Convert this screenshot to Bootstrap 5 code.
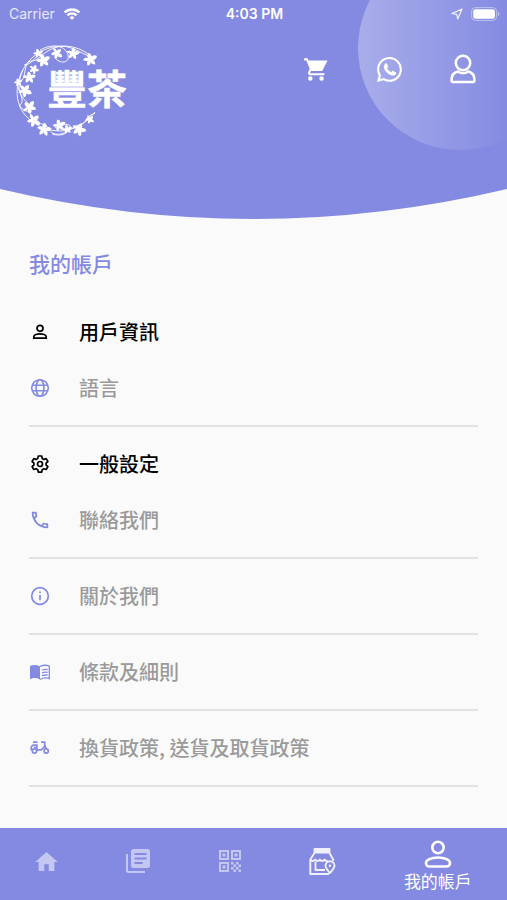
<!DOCTYPE html>
<html lang="zh-Hant">
<head>
<meta charset="utf-8">
<meta name="viewport" content="width=device-width, initial-scale=1">
<title>我的帳戶</title>
<link href="https://cdn.jsdelivr.net/npm/bootstrap@5.3.0/dist/css/bootstrap.min.css" rel="stylesheet">
<style>
:root { --brand: #848ae1; }
body { background: #fafafa; font-family: "Noto Sans CJK TC", sans-serif; }
svg { display: block; flex: none; }
.hero { color: var(--brand); }
.hero-body { background: var(--brand); min-height: 189px; }
.orb { position: absolute; top: -54px; right: -55px; width: 204px; height: 204px; border-radius: 50%; background: linear-gradient(90deg, #a8adea, #848ae1 75%); }
.status { height: 28px; font: 14px/28px Inter, sans-serif; padding: 0 7px 0 9px; color: #e8e9fb; }
.clock { font-weight: 600; color: #fff; }
.status > div { flex: 1 1 0; }
.brand { margin: 12px 0 0 12px; }
.tool { width: 73px; height: 44px; }
.tools { margin-top: 19px; }
.page-title { font-size: 21px; line-height: 32px; font-weight: 500; color: var(--brand); padding-top: 28px; margin-bottom: 16px; }
.content { padding: 0 29px; }
.group-title { font-size: 20px; line-height: 38px; font-weight: 500; color: #000; padding-top: 18px; margin: 0; }
.entry { height: 76px; font-size: 20px; line-height: 30px; font-weight: 500; color: #9a9a9a; border-bottom: 2px solid #e2e2e3; }
.entry svg { color: var(--brand); }
.line { gap: 28px; }
.tabs { background: var(--brand); height: 72px; }
.tab { flex: 2 1 0; color: #c4c7f2; padding-bottom: 6px; }
.tab-store { color: #f0f0fc; }
.tab-current { flex-grow: 3; color: #fff; font-size: 17px; line-height: 26px; }
</style>
<script src="https://cdn.jsdelivr.net/npm/bootstrap@5.3.0/dist/js/bootstrap.bundle.min.js"></script>
</head>
<body class="min-vh-100 d-flex flex-column">
<header class="hero position-relative overflow-hidden">
  <div class="hero-body">
    <div class="orb"></div>
    <div class="position-relative">
      <div class="status d-flex align-items-center">
        <div class="d-flex align-items-center gap-2"><span>Carrier</span>
          <svg width="18" height="14" viewBox="0 0 20 16" fill="none" stroke="#fff" stroke-width="2.8"><path d="M1.500 6.200a12.200 12.200 0 0 1 17 0M4.800 9.500a7.500 7.500 0 0 1 10.400 0"/><path d="M10 14.800l-2.700-2.800a3.800 3.800 0 0 1 5.400 0z" fill="#fff" stroke="none"/></svg>
        </div>
        <span class="clock">4:03 PM</span>
        <div class="d-flex align-items-center justify-content-end gap-2">
          <svg width="12" height="12" viewBox="0 0 12 12" fill="none" stroke="#f3f3fd" stroke-width="1.200" stroke-linejoin="round"><path d="M11 1 1 5.500l4.800.8L6.700 11z"/></svg>
          <svg width="29" height="14" viewBox="0 0 29 14"><rect x=".6" y=".6" width="25" height="12.800" rx="3.800" fill="none" stroke="#bfc3f0"/><rect x="2.300" y="2.300" width="21.600" height="9.400" rx="2.200" fill="#fff"/><path d="M27 4.800a2.400 2.400 0 0 1 0 4.400z" fill="#bfc3f0"/></svg>
        </div>
      </div>
      <div class="d-flex justify-content-between align-items-start">
        <a class="brand" href="#" aria-label="豐茶">
          <svg width="120" height="100" viewBox="12 40 120 100" fill="#fff">
            <defs><path id="leaf" d="M-1.500-6C.5-5.500 1.800-4 1.500-2 3-4 5-4 7-3 6.500 0 4.500 1.200 3 1 5 2 5.500 3.500 5 5.500 3 5.500 1 4.500.8 3 .5 5-.5 6.500-2.500 6.500-3.500 4-3 2.500-2 1.500-4 2.500-5.500 2-7 .5-5.500-1.200-3.500-1.500-2-1-3.200-2.500-2.800-4.500-1.500-6z"/></defs>
            <g fill="none" stroke="#fff" stroke-width=".9">
              <path d="M94 59C78 42 50 42 33 57S11 100 26 116s46 25 69-4"/>
              <path d="M89 56C74 50 67 43 54 48S39 61 31 61 27 79 20 82s6 17 1 22 10 6 12 14 12 3 16 11 14 6 22 0 12-3 15-9 7-5 9-7"/>
              <path d="M40 50C55 42 66 47 68 55s-7 9-12 4M23 70C16 85 19 96 27 102M52 134c10 3 16-1 18-6s-10-5-15 0M24 65c8 0 10-8 17-12"/>
            </g>
            <use href="#leaf" transform="translate(38 53) scale(.7)"/><use href="#leaf" x="43" y="60"/><use href="#leaf" transform="translate(57 53) rotate(60) scale(.85)"/>
            <use href="#leaf" transform="translate(73 53) rotate(20) scale(.9)"/><use href="#leaf" x="90" y="59"/>
            <use href="#leaf" transform="translate(34 69) rotate(40) scale(.7)"/><use href="#leaf" transform="translate(29 77) rotate(10) scale(.9)"/>
            <use href="#leaf" transform="translate(18 82) scale(.6)"/><use href="#leaf" transform="translate(25 90) rotate(50)"/>
            <use href="#leaf" transform="translate(29 107) rotate(-30)"/><use href="#leaf" transform="translate(34 120) rotate(60)"/>
            <use href="#leaf" transform="translate(44 129) rotate(20)"/><use href="#leaf" transform="translate(59 125) scale(.9)"/>
            <use href="#leaf" transform="translate(67 129) scale(.7)"/><use href="#leaf" transform="translate(79 129) rotate(35)"/>
            <use href="#leaf" transform="translate(90 119) rotate(60) scale(.65)"/>
            <text x="47" y="104" font-size="40" font-weight="700" font-family="'Noto Sans CJK TC', sans-serif" stroke="#fff" stroke-width=".5" stroke-linejoin="round">豐茶</text>
          </svg>
        </a>
        <nav class="tools d-flex pe-2" aria-label="捷徑">
          <a class="tool d-flex align-items-center justify-content-center text-white" href="#" aria-label="購物車">
            <svg width="27" height="27" viewBox="0 0 24 24" fill="currentColor"><path d="M6.500 18a2 2 0 1 0 0 4 2 2 0 0 0 0-4zM1 2v2h2l3 7.600-1.350 2.440A2 2 0 0 0 6 17h13v-1.600H6.420a.250.250 0 0 1-.220-.370l.9-1.630h9.950l4.750-9.400H4.900L4.100 2zM16.500 18a2 2 0 1 0 0 4 2 2 0 0 0 0-4z"/></svg>
          </a>
          <a class="tool d-flex align-items-center justify-content-center text-white" href="#" aria-label="WhatsApp">
            <svg width="25" height="25" viewBox="0 0 16 16" fill="currentColor"><path d="M13.601 2.326A7.854 7.854 0 0 0 7.994 0C3.627 0 .068 3.558.064 7.926c0 1.399.366 2.760 1.057 3.965L0 16l4.204-1.102a7.933 7.933 0 0 0 3.790.965h.004c4.368 0 7.926-3.558 7.930-7.930A7.898 7.898 0 0 0 13.600 2.326zM7.994 14.521a6.573 6.573 0 0 1-3.356-.920l-.240-.144-2.494.654.666-2.433-.156-.251a6.560 6.560 0 0 1-1.007-3.505c0-3.626 2.957-6.584 6.591-6.584a6.560 6.560 0 0 1 4.660 1.931 6.557 6.557 0 0 1 1.928 4.660c-.004 3.639-2.961 6.592-6.592 6.592z"/><path d="M5.400 4.100c.4-.3.8-.2 1 .2l.7 1.600c.1.400-.1.700-.7 1.300.8 1.300 1.500 1.900 2.800 2.500.6-.7.8-1 1.200-.8l1.600.8c.4.200.4.500.2 1-.3.800-1.200 1.300-2.100 1.200C7.200 11.600 4.400 8.500 4.400 6.100c0-.8.400-1.500 1-2z"/></svg>
          </a>
          <a class="tool d-flex align-items-center justify-content-center text-white" href="#" aria-label="我的帳戶">
            <svg width="26" height="30" viewBox="0 0 26 30" fill="none" stroke="currentColor" stroke-width="2.500"><circle cx="13" cy="9" r="7.200"/><path d="M7.800 17.500C3.500 18.500 1.500 21.500 1.500 26c0 1.400.6 2.100 2 2.100h19c1.400 0 2-.7 2-2.100 0-4.500-2-7.500-6.300-8.500-1.800 1.300-3.400 1.800-5.200 1.800s-3.400-.5-5.200-1.800z"/></svg>
          </a>
        </nav>
      </div>
    </div>
  </div>
  <svg class="w-100 position-relative" height="30" viewBox="0 0 507 30" preserveAspectRatio="none" fill="currentColor"><path d="M0 0Q253.500 60 507 0z"/></svg>
</header>

<main class="content">
  <h1 class="page-title">我的帳戶</h1>
  <h2 class="group-title line d-flex align-items-center">
    <svg width="22" height="22" viewBox="0 0 22 22" fill="none" stroke="currentColor" stroke-width="1.700"><circle cx="11" cy="7.300" r="3"/><path d="M4.800 17.200v-1.400c0-2 3.500-3 6.200-3s6.200 1 6.200 3v1.400z"/></svg>
    <span>用戶資訊</span>
  </h2>
  <a class="entry line d-flex align-items-center text-decoration-none" href="#">
    <svg width="22" height="22" viewBox="0 0 22 22" fill="none" stroke="currentColor" stroke-width="1.600"><circle cx="11" cy="11" r="8.300"/><ellipse cx="11" cy="11" rx="3.900" ry="8.300"/><path d="M3.400 8.200h15.200M3.400 13.800h15.200"/></svg>
    <span>語言</span>
  </a>
  <h2 class="group-title line d-flex align-items-center">
    <svg width="22" height="22" viewBox="0 0 22 22" fill="none" stroke="currentColor" stroke-width="1.700" stroke-linejoin="round"><path d="M9.300 3h3.400l.5 2.400 1.700 1 2.300-.8 1.700 2.900-1.800 1.600v1.900l1.800 1.600-1.700 2.900-2.300-.8-1.700 1-.5 2.400H9.300l-.5-2.400-1.700-1-2.300.8-1.700-2.900L4.900 12v-1.900L3.100 8.500l1.700-2.900 2.300.8 1.700-1z"/><circle cx="11" cy="11" r="2.500"/></svg>
    <span>一般設定</span>
  </h2>
  <a class="entry line d-flex align-items-center text-decoration-none" href="#">
    <svg width="22" height="22" viewBox="0 0 24 24" fill="currentColor"><path d="M6.540 5c.06.890.21 1.760.45 2.590l-1.200 1.200c-.410-1.200-.670-2.470-.760-3.790h1.510m9.860 12.020c.850.240 1.720.390 2.600.450v1.490c-1.320-.090-2.590-.350-3.800-.750l1.200-1.190M7.500 3H4c-.550 0-1 .450-1 1 0 9.390 7.610 17 17 17 .550 0 1-.450 1-1v-3.490c0-.550-.450-1-1-1-1.240 0-2.450-.200-3.570-.570a1 1 0 0 0-1.020.240l-2.200 2.200a15.150 15.150 0 0 1-6.590-6.590l2.200-2.200c.280-.280.360-.670.250-1.020A11.400 11.400 0 0 1 8.500 4c0-.550-.450-1-1-1z"/></svg>
    <span>聯絡我們</span>
  </a>
  <a class="entry line d-flex align-items-center text-decoration-none" href="#">
    <svg width="22" height="22" viewBox="0 0 22 22" fill="none" stroke="currentColor" stroke-width="1.700"><circle cx="11" cy="11" r="8.300"/><path d="M11 10v5.200M11 6.500v1.800"/></svg>
    <span>關於我們</span>
  </a>
  <a class="entry line d-flex align-items-center text-decoration-none" href="#">
    <svg width="22" height="22" viewBox="0 0 22 22" fill="currentColor"><path d="M1 5c3.500-1.300 7-1.200 10 .5v13c-3-1.700-6.500-1.800-10-.5z"/><path d="M11 5.500c3-1.500 6-1.700 9.300-.5v12.600c-3.300-1.100-6.300-.9-9.300.9M13 9c2-.7 3.800-.8 5.700-.4M13 11.800c2-.7 3.800-.8 5.700-.4M13 14.600c2-.7 3.800-.8 5.700-.4" fill="none" stroke="currentColor" stroke-width="1.300"/></svg>
    <span>條款及細則</span>
  </a>
  <a class="entry line d-flex align-items-center text-decoration-none" href="#">
    <svg width="22" height="22" viewBox="0 0 22 22" fill="none" stroke="currentColor" stroke-width="1.700"><path d="M4 5.200h4.500M2.200 13.300V11c0-1.700 1.200-2.800 3-2.800h2.600v4.600h4.400l3.500-3.500V5.200H12M8 10.500H5M15.700 8l1.500 4"/><circle cx="5.500" cy="14" r="2.200"/><circle cx="17.200" cy="14" r="2.100"/></svg>
    <span>換貨政策, 送貨及取貨政策</span>
  </a>
</main>

<nav class="tabs d-flex mt-auto" aria-label="主選單">
  <a class="tab d-flex align-items-center justify-content-center" href="#" aria-label="主頁"><svg width="27" height="27" viewBox="0 0 24 24" fill="currentColor"><path d="M10 20.500v-6h4v6h5v-8h3L12 3.500l-10 9h3v8z"/></svg></a>
  <a class="tab d-flex align-items-center justify-content-center" href="#" aria-label="最新消息"><svg width="24" height="24" viewBox="0 0 24 24"><path d="M1 5v16.500c0 .8.700 1.500 1.500 1.500H19" fill="none" stroke="currentColor" stroke-width="2"/><rect x="5" width="19" height="19" rx="2.500" fill="currentColor"/><path d="M8.500 5h12M8.500 9.500h12M8.500 14h8" stroke="#848ae1" stroke-width="1.800"/></svg></a>
  <a class="tab d-flex align-items-center justify-content-center" href="#" aria-label="二維碼"><svg width="22" height="22" viewBox="0 0 22 22" fill="currentColor"><path fill-rule="evenodd" d="M0 0h10v10H0zM2 2v6h6V2zM12 0h10v10H12zM14 2v6h6V2zM0 12h10v10H0zM2 14v6h6v-6z"/><path d="M3.500 3.500h3v3h-3zM15.500 3.500h3v3h-3zM3.500 15.500h3v3h-3zM12 12h2.500v2.500H12zM17 12h2.500v2.500H17zM14.500 14.500H17V17h-2.500zM19.500 14.500H22V17h-2.500zM12 17h2.500v2.500H12zM17 17h2.500v2.500H17zM14.500 19.500H17V22h-2.500zM19.500 19.500H22V22h-2.500z"/></svg></a>
  <a class="tab tab-store d-flex align-items-center justify-content-center" href="#" aria-label="分店"><svg width="27" height="27" viewBox="0 0 27 27" fill="none" stroke="currentColor" stroke-width="1.900" stroke-linejoin="round"><path d="M5.500 1h15v3.500h-15z" fill="currentColor"/><path d="M5.500 5 1.300 11.500V26H20M20.500 5l3.700 6.500v1.500M1.300 11.500c1 2 3.800 2 4.900 0 1 2 3.700 2 4.700 0 1 2 3.700 2 4.700 0 .8 1.500 2.300 1.900 3.400 1.200M6.500 14v8H16"/><path d="M20.800 25c-2.500-3-4.300-5-4.300-7.200a4.500 4.500 0 0 1 9 0c0 2.200-2 4.200-4.700 7.200z"/><circle cx="21" cy="17.800" r="1.300" fill="currentColor" stroke="none"/></svg></a>
  <a class="tab tab-current d-flex flex-column align-items-center justify-content-end text-decoration-none" href="#" aria-current="page"><svg width="28" height="28" viewBox="0 0 28 28" fill="none" stroke="currentColor" stroke-width="2.600"><circle cx="14" cy="7.500" r="5.700"/><path d="M2 23c0-3 5-5.500 12-5.500S26 20 26 23c0 2.500-1.500 3.500-4 3.500H6c-2.500 0-4-1-4-3.500z"/></svg><span>我的帳戶</span></a>
</nav>
</body>
</html>
